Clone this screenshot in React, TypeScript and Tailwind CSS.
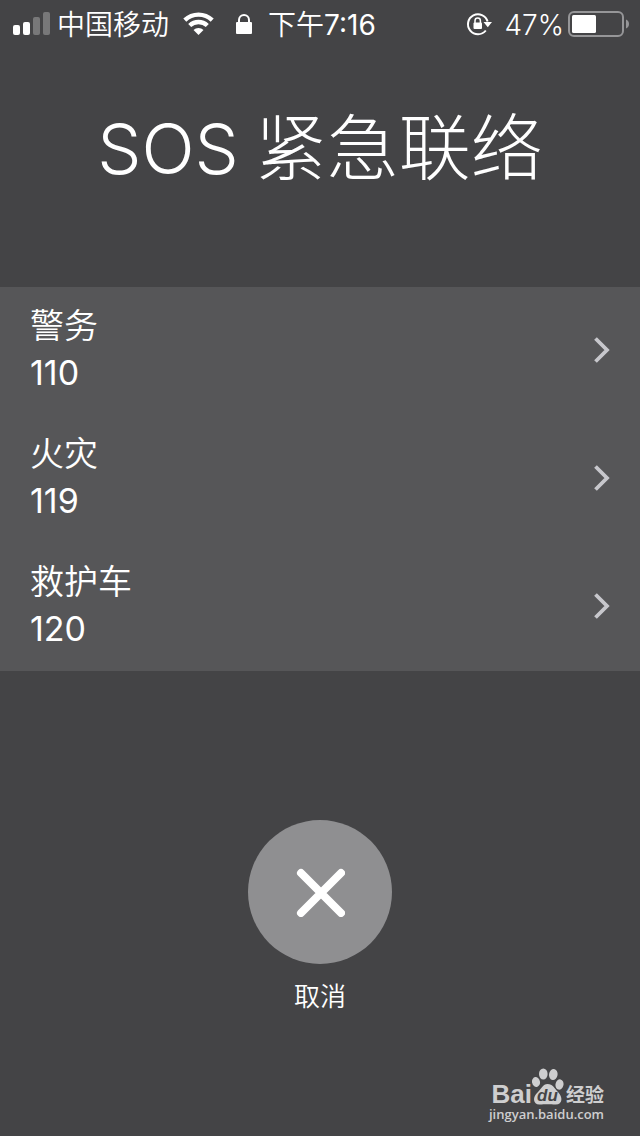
type Contact = { name: string; number: string };

const contacts: Contact[] = [
  { name: "警务", number: "110" },
  { name: "火灾", number: "119" },
  { name: "救护车", number: "120" },
];

function SignalIcon() {
  return (
    <svg width="38" height="24" viewBox="0 0 38 24" fill="#fff" aria-hidden="true">
      <rect x="0" y="13" width="7" height="10" rx="2" />
      <rect x="10" y="10" width="7" height="13" rx="2" />
      <rect x="20" y="5" width="7" height="18" rx="2" opacity=".28" />
      <rect x="30" y="0" width="7" height="23" rx="2" opacity=".28" />
    </svg>
  );
}

function WifiIcon() {
  return (
    <svg width="32" height="24" viewBox="0 0 32 24" fill="none" stroke="#fff" strokeWidth="4.400" aria-hidden="true">
      <path d="M1.800 8.100A20 20 0 0 1 29.200 8.100" />
      <path d="M6.700 13.500A13 13 0 0 1 24.300 13.500" />
      <path d="M15.500 23L10.500 18.100A7 7 0 0 1 20.500 18.100Z" fill="#fff" stroke="none" />
    </svg>
  );
}

function LockIcon() {
  return (
    <svg width="16" height="20" viewBox="0 0 16 20" aria-hidden="true">
      <rect x="0" y="8" width="16" height="12" rx="1" fill="#fff" />
      <path d="M3 9V6A5 5 0 0 1 13 6V9" fill="none" stroke="#fff" strokeWidth="2" />
    </svg>
  );
}

function RotationLockIcon() {
  return (
    <svg width="26" height="24" viewBox="0 0 26 24" fill="none" stroke="#fff" strokeWidth="2" aria-hidden="true">
      <path d="M19.800 18.500A10 10 0 1 1 21.600 9.500" />
      <path d="M17.500 10H26L21.800 15.300Z" fill="#fff" stroke="none" />
      <rect x="7.500" y="10.500" width="8.500" height="6.500" rx="1" fill="#fff" stroke="none" />
      <path d="M9 11V8.700A2.700 2.700 0 0 1 14.400 8.700V11" strokeWidth="1.500" />
    </svg>
  );
}

function BatteryIcon() {
  return (
    <svg width="62" height="26" viewBox="0 0 62 26" aria-hidden="true">
      <rect x="1" y="1" width="54" height="24" rx="5" fill="none" stroke="#969698" strokeWidth="2" />
      <rect x="4" y="4" width="24" height="18" rx="1.500" fill="#fff" />
      <path d="M58 8.500C62 10 62 16 58 17.500Z" fill="#969698" />
    </svg>
  );
}

function Watermark() {
  return (
    <div className="flex flex-col items-end text-[#cececf]">
      <div className="flex h-[38px] items-end">
        <span className="font-['Liberation_Sans',sans-serif] text-[26px] leading-6 font-bold">Bai</span>
        <svg width="32" height="38" viewBox="0 0 32 38" fill="currentColor" aria-hidden="true">
          <ellipse cx="4" cy="14" rx="4" ry="5" transform="rotate(-12 4 14)" />
          <ellipse cx="11.300" cy="6" rx="4.300" ry="5.500" />
          <ellipse cx="21.300" cy="6.500" rx="4.300" ry="5.500" transform="rotate(8 21.300 6.500)" />
          <ellipse cx="27.500" cy="16.500" rx="4" ry="5.200" transform="rotate(12 27.500 16.500)" />
          <path d="M15.500 16C11 16 9 21 6 24C0 29 1 37 8 36.500C12 36 19 36 23 36.500C31 37 31 29 26 24C22 20 21 16 15.500 16Z" />
          <text x="15.500" y="33" textAnchor="middle" fill="#444446" fontFamily="Liberation Sans, sans-serif" fontSize="17" fontWeight="700" fontStyle="italic">du</text>
        </svg>
        <span className="ml-0.5 font-['Noto_Sans_CJK_SC',sans-serif] text-[19px] leading-6 font-bold">经验</span>
      </div>
      <span className="font-['Open_Sans',sans-serif] text-[13px] leading-4 font-semibold">jingyan.baidu.com</span>
    </div>
  );
}

export default function App() {
  return (
    <div className="flex min-h-screen flex-col bg-[#444446] font-['Inter','Noto_Sans_CJK_SC',sans-serif] text-white">
      <header className="flex h-12 items-center pr-[10px] pl-[13px] text-[28px] leading-10 font-[350]">
        <SignalIcon />
        <span className="ml-[6px] pt-0.5">中国移动</span>
        <span className="ml-[14px]"><WifiIcon /></span>
        <span className="ml-[21px]"><LockIcon /></span>
        <time className="ml-4 pt-0.5">下午<span className="font-normal">7:16</span></time>
        <div className="ml-auto flex items-center">
          <RotationLockIcon />
          <span className="mr-1 ml-3 pt-0.5">47%</span>
          <BatteryIcon />
        </div>
      </header>

      <main className="flex grow flex-col">
        <h1 className="flex items-baseline justify-center gap-4 pt-12 pb-[86px] text-[72px] leading-[104px] font-light">
          <span className="text-[70px]">SOS</span>
          <span>紧急联络</span>
        </h1>

        <ul className="bg-[#565658]">
          {contacts.map((contact) => (
            <li key={contact.number}>
              <button type="button" className="flex h-32 w-full items-center justify-between pr-[30px] pl-[30px] text-left">
                <span className="flex flex-col pb-1 text-[34px] leading-[47px] font-[350]">
                  <span>{contact.name}</span>
                  <span className="font-normal">{contact.number}</span>
                </span>
                <svg width="17" height="30" viewBox="0 0 17 30" fill="none" stroke="#c7c7cc" strokeWidth="3.800" aria-hidden="true">
                  <path d="M2.500 2.500L14 14L2.500 25.500" />
                </svg>
              </button>
            </li>
          ))}
        </ul>

        <div className="mt-[149px] flex flex-col items-center">
          <button
            type="button"
            aria-labelledby="cancel-label"
            className="flex size-36 items-center justify-center rounded-full bg-[#8f8f91]"
          >
            <svg width="50" height="50" viewBox="0 0 50 50" fill="none" stroke="#fff" strokeWidth="8" strokeLinecap="round" aria-hidden="true">
              <path d="M6 6L46 46M46 6L6 46" />
            </svg>
          </button>
          <span id="cancel-label" className="mt-[13px] text-[26px] leading-10 font-[350]">取消</span>
        </div>
      </main>

      <footer className="flex justify-end pr-9 pb-[14px]">
        <Watermark />
      </footer>
    </div>
  );
}
